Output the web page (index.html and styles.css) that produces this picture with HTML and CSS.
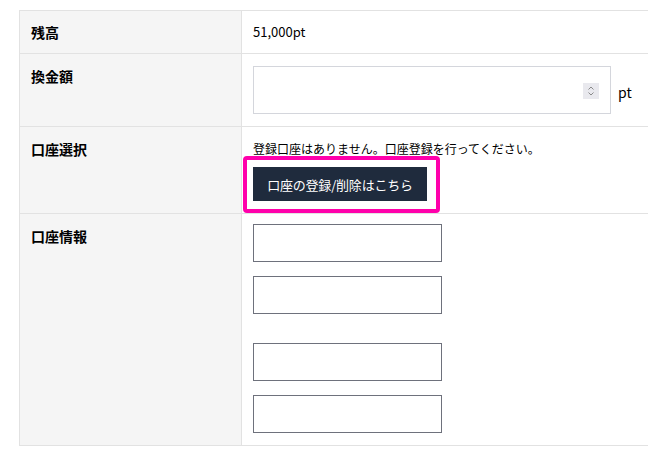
FILE: index.html
```html
<!DOCTYPE html>
<html lang="ja">
<head>
<meta charset="utf-8">
<link rel="stylesheet" href="styles.css">
</head>
<body>
<div class="page">
  <table class="form">
    <tr class="row-first">
      <th>残高</th>
      <td class="value">51,000pt</td>
    </tr>
    <tr>
      <th>換金額</th>
      <td>
        <div class="amount">
          <div class="num-wrap">
            <input class="num" type="text" value="">
            <span class="spin">
              <svg width="8" height="12" viewBox="0 0 8 12"><path d="M1.5 4.5 L4 2 L6.5 4.5" fill="none" stroke="#8a8a8a" stroke-width="1"/><path d="M1.5 7.5 L4 10 L6.5 7.5" fill="none" stroke="#8a8a8a" stroke-width="1"/></svg>
            </span>
          </div>
          <span class="unit">pt</span>
        </div>
      </td>
    </tr>
    <tr>
      <th>口座選択</th>
      <td>
        <p class="notice">登録口座はありません。口座登録を行ってください。</p>
        <div class="btn-wrap">
          <button class="btn" type="button">口座の登録/削除はこちら</button>
        </div>
      </td>
    </tr>
    <tr>
      <th>口座情報</th>
      <td>
        <div class="fields">
          <div class="group">
            <input class="field" type="text">
            <input class="field" type="text">
          </div>
          <div class="group">
            <input class="field" type="text">
            <input class="field" type="text">
          </div>
        </div>
      </td>
    </tr>
  </table>
</div>
</body>
</html>
```
FILE: styles.css
```css
html, body {
  margin: 0;
  padding: 0;
  background: #ffffff;
  overflow: hidden;
}
body {
  font-family: "Noto Sans CJK JP", "Noto Sans", sans-serif;
  color: #000000;
  font-size: 13px;
}
.page {
  padding: 10px 0 0 19px;
  width: 700px;
}
.form {
  border-collapse: collapse;
  width: 680px;
  border-left: 1px solid #e2e2e2;
}
.form th,
.form td {
  border-top: 1px solid #e2e2e2;
  border-bottom: 1px solid #e2e2e2;
  vertical-align: top;
  text-align: left;
  line-height: 20px;
}
.form th {
  width: 199px;
  background: #f5f5f5;
  padding: 12px 11px;
  font-size: 14px;
  font-weight: 700;
  border-right: 1px solid #e2e2e2;
}
.form td {
  padding: 12px 11px;
  font-size: 13px;
}
.form .row-first th,
.form .row-first td {
  padding-top: 11px;
  padding-bottom: 11px;
}
.amount {
  display: flex;
  align-items: center;
  gap: 7px;
}
.num-wrap {
  position: relative;
  width: 358px;
  height: 48px;
}
.num {
  box-sizing: border-box;
  width: 100%;
  height: 100%;
  border: 1px solid #d4d6dc;
  border-radius: 0;
  margin: 0;
  padding: 0 10px;
  font: inherit;
  outline: none;
}
.spin {
  position: absolute;
  right: 12px;
  top: 17px;
  width: 16px;
  height: 16px;
  background: #e9e9ee;
  display: flex;
  align-items: center;
  justify-content: center;
}
.unit {
  font-size: 14px;
  margin-top: 3px;
}
.notice {
  margin: 0;
  line-height: 19px;
  font-size: 12px;
}
.btn-wrap {
  position: relative;
  display: inline-block;
  margin-top: 9px;
  vertical-align: top;
}
.btn-wrap::after {
  content: "";
  position: absolute;
  top: -11px;
  left: -10px;
  right: -13px;
  bottom: -12px;
  border: 4px solid #ff00ab;
  border-radius: 4px;
  pointer-events: none;
}
.btn {
  display: block;
  width: 174px;
  height: 34px;
  margin: 0;
  padding: 0;
  border: none;
  border-radius: 0;
  background: #1f2b3d;
  color: #ffffff;
  font-family: "Noto Sans CJK JP", "Noto Sans", sans-serif;
  font-size: 13px;
  letter-spacing: -0.2px;
}
.fields {
  display: flex;
  flex-direction: column;
  gap: 29px;
  margin-top: -2px;
}
.group {
  display: flex;
  flex-direction: column;
  gap: 14px;
}
.field {
  box-sizing: border-box;
  display: block;
  width: 189px;
  height: 38px;
  margin: 0;
  border: 1px solid #6e717c;
  border-radius: 0;
  padding: 0 6px;
  font: inherit;
  outline: none;
}
```
